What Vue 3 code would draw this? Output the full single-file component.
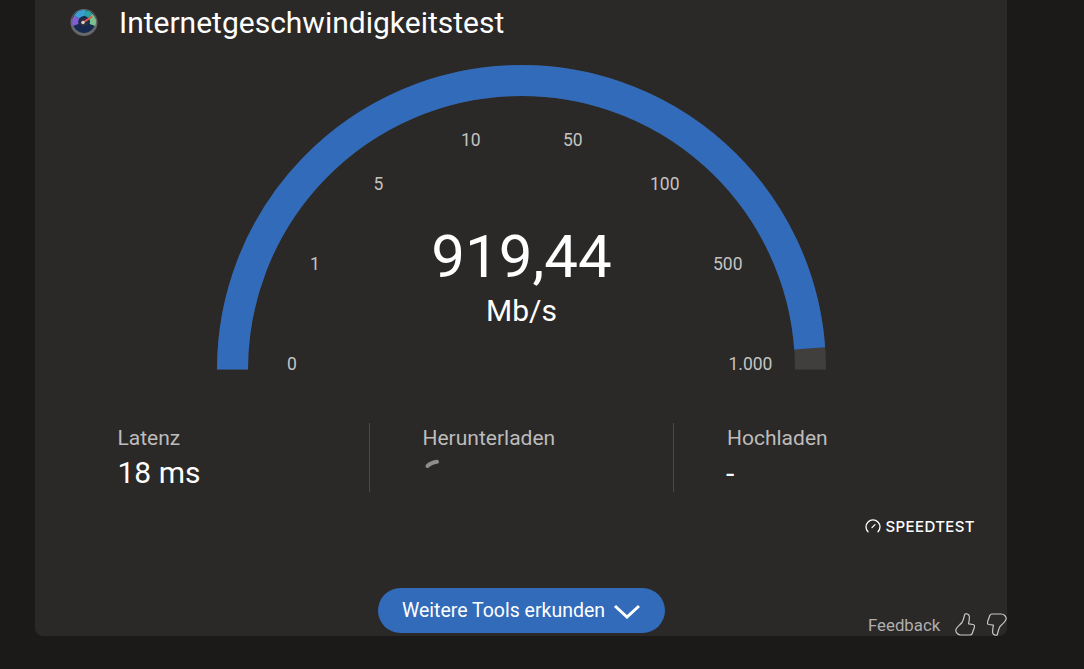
<template>
  <div class="page">
    <section class="card">
      <header class="title-row">
        <svg class="app-icon" width="28" height="28" viewBox="0 0 28 28">
          <circle cx="14" cy="14.5" r="13.5" fill="#66686b" />
          <path d="M1.5 12 A12.8 12.8 0 0 1 26.5 12 A13 10 0 0 0 1.5 12 Z" fill="#25282d" />
          <circle cx="14" cy="13.5" r="11.4" fill="#16294f" />
          <path d="M5.6 17 A8.6 8.6 0 0 1 6.8 9" fill="none" stroke="#8060d0" stroke-width="6" />
          <path d="M6.8 9 A8.6 8.6 0 0 1 15 5" fill="none" stroke="#3aa0d0" stroke-width="6" />
          <path d="M15 5 A8.6 8.6 0 0 1 20.5 8" fill="none" stroke="#2ca3a3" stroke-width="6" />
          <path d="M20.5 8 A8.6 8.6 0 0 1 22.4 17" fill="none" stroke="#7cc08f" stroke-width="6" />
          <circle cx="14" cy="14.5" r="4" fill="#2a3040" />
          <path d="M13 14.5 L21.5 9" stroke="#e0584a" stroke-width="2" stroke-linecap="round" />
          <circle cx="13" cy="14.5" r="1.7" fill="#d4d4d4" />
        </svg>
        <h1 class="title">Internetgeschwindigkeitstest</h1>
      </header>

      <div class="gauge">
        <svg class="gauge-arc" width="609" height="305" viewBox="0 0 609 305">
          <path d="M 15.5 304.5 A 289 289 0 0 1 593.5 304.5" fill="none" stroke="#403f3e" stroke-width="31" />
          <path :d="bluePath" fill="none" stroke="#316bba" stroke-width="31" />
        </svg>
        <span
          v-for="t in ticks"
          :key="t.label"
          class="tick"
          :style="{ left: t.x + 'px', top: t.y + 'px' }"
        >{{ t.label }}</span>
        <div class="reading">
          <div class="value">919,44</div>
          <div class="unit">Mb/s</div>
        </div>
      </div>

      <div class="stats">
        <div class="stat">
          <div class="stat-label">Latenz</div>
          <div class="stat-value">18 ms</div>
        </div>
        <div class="stat">
          <div class="stat-label">Herunterladen</div>
          <svg class="spinner" width="16" height="12" viewBox="0 0 16 12">
            <path d="M3.5 8 Q6 5 13 3.8" fill="none" stroke="#8f8e8d" stroke-width="4" stroke-linecap="round" />
          </svg>
        </div>
        <div class="stat">
          <div class="stat-label">Hochladen</div>
          <div class="stat-value dash">-</div>
        </div>
      </div>

      <div class="brand">
        <svg width="16" height="14" viewBox="0 0 16 14">
          <path d="M3 12.8 A7 7 0 1 1 13 12.8" fill="none" stroke="#fff" stroke-width="1.3" stroke-linecap="round" />
          <path d="M7 8.6 L10 5.6" stroke="#fff" stroke-width="1.3" stroke-linecap="round" />
        </svg>
        <span>SPEEDTEST</span>
      </div>

      <div class="more-row">
        <button class="more">
          Weitere Tools erkunden
          <svg width="28" height="16" viewBox="0 0 28 16">
            <path d="M2 3 L14 14 L26 3" fill="none" stroke="#fff" stroke-width="3" />
          </svg>
        </button>
      </div>
    </section>

    <div class="feedback">
      <span>Feedback</span>
      <svg width="20" height="23" viewBox="0 0 20 23">
        <path d="M7 9.5 C8.5 7 9 4 9.7 1.5 C10 0.3 13.5 0.6 14.2 2.8 C14.8 5 14 8 13.6 10.8 L18 11.5 C19.5 11.8 19.8 13 19.4 14.2 L17.2 20.5 C16.8 21.7 16 22 15 22 L6 22 C3 22 0.8 19.5 0.8 17.5 C0.8 14.5 4.5 12.5 7 9.5 Z" fill="none" stroke="#c8c7c6" stroke-width="1.2" stroke-linejoin="round" />
      </svg>
      <svg class="thumb-down" width="20" height="23" viewBox="0 0 20 23">
        <path d="M7 9.5 C8.5 7 9 4 9.7 1.5 C10 0.3 13.5 0.6 14.2 2.8 C14.8 5 14 8 13.6 10.8 L18 11.5 C19.5 11.8 19.8 13 19.4 14.2 L17.2 20.5 C16.8 21.7 16 22 15 22 L6 22 C3 22 0.8 19.5 0.8 17.5 C0.8 14.5 4.5 12.5 7 9.5 Z" fill="none" stroke="#c8c7c6" stroke-width="1.2" stroke-linejoin="round" />
      </svg>
    </div>
  </div>
</template>

<script setup>
import { computed } from 'vue'

const ticks = [
  { label: '0', x: 70, y: 289 },
  { label: '1', x: 93, y: 189 },
  { label: '5', x: 156.5, y: 109 },
  { label: '10', x: 244, y: 65 },
  { label: '50', x: 346, y: 65 },
  { label: '100', x: 433, y: 109 },
  { label: '500', x: 496, y: 189 },
  { label: '1.000', x: 511.5, y: 289 },
]

// blue stops a little short of the right end of the arc
const bluePath = computed(() => {
  const a = (4.2 * Math.PI) / 180
  const x = 304.5 + 289 * Math.cos(a)
  const y = 304.5 - 289 * Math.sin(a)
  return `M 15.5 304.5 A 289 289 0 0 1 ${x.toFixed(2)} ${y.toFixed(2)}`
})
</script>

<style>
html, body { background: #1b1a19; }
</style>

<style scoped>
.page {
  position: relative;
  width: 1084px;
  height: 669px;
  background: #1b1a19;
  overflow: hidden;
  font-family: Roboto, "Liberation Sans", sans-serif;
}
.card {
  margin-left: 35px;
  width: 972px;
  height: 636px;
  background: #2a2928;
  border-radius: 0 0 8px 8px;
  box-sizing: border-box;
}
.title-row {
  display: flex;
  align-items: center;
  height: 46px;
  padding-left: 35px;
  gap: 21px;
}
.app-icon { flex: none; margin-top: -2px; }
.title {
  margin: 0;
  font-size: 30px;
  font-weight: 400;
  color: #fff;
  line-height: 46px;
}
.gauge {
  position: relative;
  width: 609px;
  height: 305px;
  margin: 19px 0 0 182px;
}
.gauge-arc { display: block; }
.tick {
  position: absolute;
  font-size: 17.5px;
  line-height: 20px;
  color: #c4c3c2;
}
.reading {
  position: absolute;
  left: 0;
  right: 0;
  top: 157px;
  text-align: center;
  color: #fff;
}
.value { font-size: 60px; line-height: 70px; }
.unit { font-size: 30px; line-height: 36px; margin-top: 1px; }
.stats {
  display: grid;
  grid-template-columns: repeat(3, 304.5px);
  margin: 53px 0 0 29px;
  height: 69px;
}
.stat {
  padding-left: 53px;
  border-left: 1px solid #4a4948;
}
.stat:first-child { padding-left: 53.5px; border-left: none; }
.stat-label {
  font-size: 21px;
  line-height: 28px;
  color: #bdbcbb;
  margin-top: 1px;
}
.stat-value {
  font-size: 30px;
  line-height: 36px;
  margin-top: 3px;
  color: #fff;
}
.dash { margin-top: 4px; margin-left: -1px; }
.spinner { display: block; margin-top: 6px; margin-left: 1px; }
.brand {
  display: flex;
  justify-content: flex-end;
  align-items: center;
  gap: 4px;
  margin: 25px 32px 0 0;
  height: 18px;
  font-family: Inter, sans-serif;
  font-weight: 500;
  font-size: 15px;
  letter-spacing: 0.38px;
  color: #fff;
}
.more-row {
  display: flex;
  justify-content: center;
  margin-top: 53px;
  padding-left: 1px;
}
.more {
  display: flex;
  align-items: center;
  gap: 8px;
  height: 45px;
  padding: 0 24px;
  border: none;
  border-radius: 23px;
  background: #316bba;
  color: #fff;
  font-family: inherit;
  font-size: 19.5px;
}
.feedback {
  position: absolute;
  left: 868px;
  top: 613px;
  display: flex;
  align-items: center;
  gap: 12px;
  font-size: 16.8px;
  color: #b0afae;
}
.feedback span { margin-right: 2.5px; }
.thumb-down { transform: rotate(180deg); }
</style>
